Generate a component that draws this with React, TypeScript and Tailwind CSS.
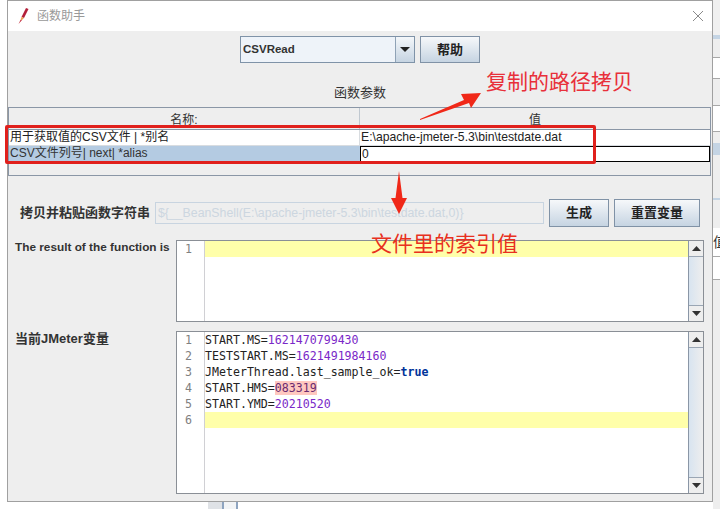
const cjk = '"Liberation Sans","Noto Sans CJK SC",sans-serif';

function Gutter({ n }: { n: number }) {
  return (
    <div className="w-[28px] shrink-0 border-r border-[#d0d0d4] bg-white text-[11.6px] leading-[16px] text-[#808080]">
      {Array.from({ length: n }, (_, i) => (
        <div key={i} className="pl-[8px] font-['DejaVu_Sans_Mono',monospace]">{i + 1}</div>
      ))}
    </div>
  );
}

function ScrollBar() {
  return (
    <div className="flex w-[15px] shrink-0 flex-col border-l border-[#8a96a6] bg-[#eeeeee]">
      <div className="flex h-[16px] items-center justify-center border-b border-[#9aa6b4] bg-[#eeeeee]">
        <svg width="9" height="5"><path d="M0 5 L4.5 0 L9 5Z" fill="#333" /></svg>
      </div>
      <div className="flex-1 bg-gradient-to-r from-[#d8e4f0] to-[#eeeeee]" />
      <div className="flex h-[16px] items-center justify-center border-t border-[#9aa6b4] bg-[#eeeeee]">
        <svg width="9" height="5"><path d="M0 0 L4.5 5 L9 0Z" fill="#333" /></svg>
      </div>
    </div>
  );
}

function Btn({ w, h, label }: { w: string; h: string; label: string }) {
  return (
    <div className={`${w} ${h} flex items-center justify-center border border-[#8092a6] bg-gradient-to-b from-[#f6f8fa] to-[#c6d4e2] text-[13px] font-bold text-[#222]`}>
      {label}
    </div>
  );
}

const stripRows: [string, string][] = [
  ['h-[35px]', 'bg-[#f0f0f0]'],
  ['h-[4px]', 'bg-[#c4d4e4]'],
  ['h-[18px]', 'bg-[#eeeeee]'],
  ['h-[1px]', 'bg-[#a8a8a8]'],
  ['h-[20px]', 'bg-white'],
  ['h-[1px]', 'bg-[#a8a8a8]'],
  ['h-[26px]', 'bg-[#eeeeee]'],
  ['h-[1px]', 'bg-[#a8a8a8]'],
  ['h-[25px]', 'bg-white'],
  ['h-[1px]', 'bg-[#a8a8a8]'],
  ['h-[11px]', 'bg-[#eeeeee]'],
  ['h-[12px]', 'bg-[#c4d4e4]'],
  ['h-[43px]', 'bg-[#eeeeee]'],
  ['h-[2px]', 'bg-[#c4d4e4]'],
  ['h-[28px]', 'bg-[#eeeeee]'],
];

export default function App() {
  return (
    <div className="relative h-[509px] w-[720px] overflow-hidden bg-white" style={{ fontFamily: cjk }}>
      <div className="flex h-[509px] w-[720px]">
        <div className="flex w-[713px] shrink-0 flex-col">
          <div className="ml-[7px] flex h-[502px] w-[706px] flex-col border border-[#a0a0a0] bg-[#eeeeee]">
            <div className="flex h-[30px] shrink-0 items-center bg-white pl-[10px] pr-[8px]">
              <svg width="11" height="16" viewBox="0 0 11 16">
                <path d="M8 0 L10.5 1 L6 10 L3.5 9Z" fill="#b3203a" />
                <path d="M3.5 9 L6 10 L4 12 L2.5 12Z" fill="#e8a050" />
                <path d="M2.5 12 L4 12 L0.5 16Z" fill="#c02030" />
              </svg>
              <span className="ml-[8px] text-[12px] text-[#999]">函数助手</span>
              <svg className="ml-auto" width="12" height="12" viewBox="0 0 12 12">
                <path d="M1 1 L11 11 M11 1 L1 11" stroke="#8a8a8a" strokeWidth="1" fill="none" />
              </svg>
            </div>

            <div className="mt-[5px] flex justify-center">
              <div className="flex h-[27px] w-[175px] border border-[#7f93a8]">
                <div className="flex flex-1 items-center bg-[#eef3f9] pl-[2px] text-[11.5px] font-bold text-[#333]">CSVRead</div>
                <div className="flex w-[19px] items-center justify-center border-l border-[#8fa2b6] bg-gradient-to-b from-[#f4f7fa] to-[#c6d4e2]">
                  <svg width="10" height="5"><path d="M0 0 L10 0 L5 5Z" fill="#222" /></svg>
                </div>
              </div>
              <div className="ml-[5px]"><Btn w="w-[60px]" h="h-[27px]" label="帮助" /></div>
            </div>

            <div className="mt-[22px] text-center text-[13px] leading-[16px] text-[#333]">函数参数</div>

            <div className="mt-[6px] h-[69px] w-[703px] border border-[#8a96a6] bg-[#eeeeee] text-[12px]">
              <div className="flex h-[22px] border-b border-[#8a96a6] text-[#333]">
                <div className="w-[351px] border-r border-[#c0c8d0] pt-[4px] text-center leading-[16px]">名称:</div>
                <div className="flex-1 pt-[4px] text-center leading-[16px]">值</div>
              </div>
              <div className="flex h-[16px] border-b border-[#d8dce0] bg-white leading-[15px] text-[#222]">
                <div className="w-[351px] border-r border-[#d8dce0] pl-[1px]">用于获取值的CSV文件 | *别名</div>
                <div className="flex-1 pl-[1px] text-[12.2px]">E:\apache-jmeter-5.3\bin\testdate.dat</div>
              </div>
              <div className="flex h-[16px] bg-white leading-[14px] text-[#222]">
                <div className="w-[351px] bg-[#b4cbe2] pl-[1px] text-[#333]">CSV文件列号| next| *alias</div>
                <div className="flex-1 border border-black pl-[1px]">0</div>
              </div>
            </div>

            <div className="mt-[23px] flex items-center">
              <div className="ml-[12px] w-[131px] text-[13px] font-bold text-[#333]">拷贝并粘贴函数字符串</div>
              <div className="ml-[4px] flex h-[22px] w-[389px] items-center overflow-hidden border border-[#c8d4e0] pl-[2px] text-[12.3px] whitespace-nowrap text-[#ccd6e0]">
                {'${__BeanShell(E:\\apache-jmeter-5.3\\bin\\testdate.dat,0)}'}
              </div>
              <div className="ml-[5px]"><Btn w="w-[60px]" h="h-[28px]" label="生成" /></div>
              <div className="ml-[5px]"><Btn w="w-[86px]" h="h-[28px]" label="重置变量" /></div>
            </div>

            <div className="mt-[13px] flex h-[82px]">
              <div className="ml-[7px] w-[161px] text-[11.8px] leading-[14px] font-bold text-[#333]">The result of the function is</div>
              <div className="flex w-[528px] border border-[#8a8f96] bg-white">
                <Gutter n={1} />
                <div className="flex-1"><div className="h-[16px] bg-[#ffffaa]" /></div>
                <ScrollBar />
              </div>
            </div>

            <div className="mt-[9px] flex h-[163px]">
              <div className="ml-[7px] w-[161px] text-[13px] leading-[16px] font-bold text-[#333]">当前JMeter变量</div>
              <div className="flex w-[528px] border border-[#8a8f96] bg-white">
                <Gutter n={6} />
                <div className="flex-1 font-['DejaVu_Sans_Mono',monospace] text-[11.6px] leading-[16px] text-[#222]">
                  <div>START.MS=<span className="text-[#7a28c8]">1621470799430</span></div>
                  <div>TESTSTART.MS=<span className="text-[#7a28c8]">1621491984160</span></div>
                  <div>JMeterThread.last_sample_ok=<span className="font-bold text-[#00339a]">true</span></div>
                  <div>START.HMS=<span className="bg-[#ffc8c0] text-[#6a2a70]">083319</span></div>
                  <div>START.YMD=<span className="text-[#7a28c8]">20210520</span></div>
                  <div className="h-[16px] bg-[#ffffaa]" />
                </div>
                <ScrollBar />
              </div>
            </div>
          </div>
          <div className="ml-[208px] flex h-[7px] w-[30px]">
            <div className="w-[14px] bg-[#dfe2e6]" />
            <div className="w-[2px] bg-[#8ea4c0]" />
            <div className="w-[12px] bg-[#f2f4f6]" />
            <div className="w-[2px] bg-[#8ea4c0]" />
          </div>
        </div>
        <div className="flex w-[7px] shrink-0 flex-col overflow-hidden">
          {stripRows.map(([h, c], i) => (
            <div key={i} className={`${h} ${c} shrink-0`} />
          ))}
          <div className="flex h-[28px] shrink-0 items-center bg-white text-[14px] whitespace-nowrap text-[#333]">值</div>
          <div className="h-[1px] shrink-0 bg-[#a8a8a8]" />
          <div className="h-[22px] shrink-0 bg-white" />
          <div className="h-[1px] shrink-0 bg-[#a8a8a8]" />
          <div className="flex-1 bg-[#eeeeee]" />
        </div>
      </div>

      <div className="absolute top-[125px] left-[5px] h-[39px] w-[591px] rounded-[2px] border-[3px] border-[#e0201c]" />
      <div className="absolute top-[68px] left-[486px] text-[21px] leading-[28px] text-[#e8303a]">复制的路径拷贝</div>
      <div className="absolute top-[230px] left-[371px] text-[21px] leading-[28px] text-[#e83020]">文件里的索引值</div>
      <svg className="absolute top-[88px] left-[415px]" width="70" height="35" viewBox="0 0 70 35">
        <path d="M5 31 L49 12 L46 6 L66 5 L56 20 L54 15 L5 32Z" fill="#f02818" />
      </svg>
      <svg className="absolute top-[170px] left-[390px]" width="18" height="46" viewBox="0 0 18 46">
        <path d="M9 1 L12.5 28 L17 28 L9 44 L1 28 L5.5 28Z" fill="#f02818" />
      </svg>
    </div>
  );
}
